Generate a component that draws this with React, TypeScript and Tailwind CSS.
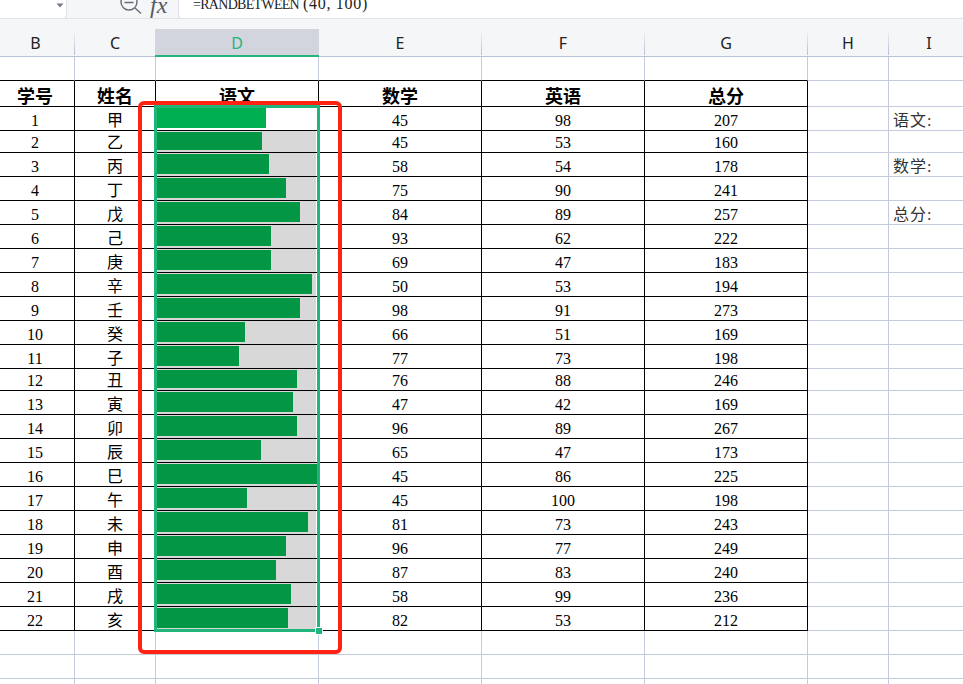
import React from 'react';

type Row = { id: number; name: string; bar: number; math: number; eng: number; total: number; short?: boolean; note?: string };

const rows: Row[] = [
  { id: 1, name: '甲', bar: 109, math: 45, eng: 98, total: 207, note: '语文:' },
  { id: 2, name: '乙', bar: 105, math: 45, eng: 53, total: 160, short: true },
  { id: 3, name: '丙', bar: 112, math: 58, eng: 54, total: 178, note: '数学:' },
  { id: 4, name: '丁', bar: 129, math: 75, eng: 90, total: 241 },
  { id: 5, name: '戊', bar: 143, math: 84, eng: 89, total: 257, note: '总分:' },
  { id: 6, name: '己', bar: 114, math: 93, eng: 62, total: 222 },
  { id: 7, name: '庚', bar: 114, math: 69, eng: 47, total: 183 },
  { id: 8, name: '辛', bar: 155, math: 50, eng: 53, total: 194 },
  { id: 9, name: '壬', bar: 143, math: 98, eng: 91, total: 273 },
  { id: 10, name: '癸', bar: 88, math: 66, eng: 51, total: 169 },
  { id: 11, name: '子', bar: 82, math: 77, eng: 73, total: 198 },
  { id: 12, name: '丑', bar: 140, math: 76, eng: 88, total: 246, short: true },
  { id: 13, name: '寅', bar: 136, math: 47, eng: 42, total: 169 },
  { id: 14, name: '卯', bar: 140, math: 96, eng: 89, total: 267 },
  { id: 15, name: '辰', bar: 104, math: 65, eng: 47, total: 173 },
  { id: 16, name: '巳', bar: 160, math: 45, eng: 86, total: 225 },
  { id: 17, name: '午', bar: 90, math: 45, eng: 100, total: 198 },
  { id: 18, name: '未', bar: 151, math: 81, eng: 73, total: 243 },
  { id: 19, name: '申', bar: 129, math: 96, eng: 77, total: 249 },
  { id: 20, name: '酉', bar: 119, math: 87, eng: 83, total: 240 },
  { id: 21, name: '戌', bar: 134, math: 58, eng: 99, total: 236 },
  { id: 22, name: '亥', bar: 131, math: 82, eng: 53, total: 212 },
];

const cell = 'flex items-end justify-center leading-[18px] border-r border-b border-black';
const light = 'border-r border-b border-[#c4cbdf]';

const Separator = () => <div className="w-px mt-[10px] mb-px shrink-0 bg-gradient-to-b from-[#f5f6f8] to-[#b4bdd2]" />;

const ColHead: React.FC<{ label: string; width: string; pad?: string; sep?: boolean }> = ({ label, width, pad = '', sep = true }) => (
  <div className={`${width} flex bg-[#f5f6f8] border-b border-[#b9c1d6]`}>
    <div className={`flex-1 pt-[14px] text-center leading-[20px] ${pad}`}>{label}</div>
    {sep && <Separator />}
  </div>
);

const BlankRow: React.FC<{ height: string; line: string }> = ({ height, line }) => (
  <div className={`flex ${height}`}>
    <div className={`w-[75px] border-r border-[#c4cbdf] border-b ${line}`} />
    <div className={`w-[81px] border-r border-[#c4cbdf] border-b ${line}`} />
    <div className={`w-[163px] border-r border-[#c4cbdf] border-b ${line}`} />
    <div className={`w-[163px] border-r border-[#c4cbdf] border-b ${line}`} />
    <div className={`w-[163px] border-r border-[#c4cbdf] border-b ${line}`} />
    <div className={`w-[163px] border-r border-[#c4cbdf] border-b ${line}`} />
    <div className={`w-[81px] ${light}`} />
    <div className="flex-1 border-b border-[#c4cbdf]" />
  </div>
);

export default function App() {
  return (
    <div className="relative w-[963px] h-[684px] overflow-hidden bg-white text-black text-[16px] font-['Liberation_Serif','Noto_Sans_CJK_SC',serif]">
      {/* formula bar, cut off by the crop */}
      <div className="flex h-[19px] bg-[#f5f6f8] border-b border-[#dfe2ea] overflow-hidden">
        <div className="w-[67px] -mb-px flex justify-end pr-[2px] pt-[3px] bg-white border-r border-b border-[#dfe2ea] rounded-br-[4px]">
          <svg width="8" height="5" viewBox="0 0 8 5"><path d="M0.5 0.5h7L4 4.5z" fill="#777b85" /></svg>
        </div>
        <div className="w-[111px] flex items-start pl-[52px] gap-[7px]">
          <svg width="24" height="15" viewBox="0 0 24 15" fill="none" stroke="#666b75" strokeWidth="1.4">
            <circle cx="10" cy="2" r="8" />
            <path d="M5.5 2.5h9M16 8l6 5.5" />
          </svg>
          <span className="text-[24px] leading-[16px] italic text-[#555a64] -mt-[3px]">fx</span>
        </div>
        <div className="flex-1 -mb-px pl-[14px] bg-white border-l border-b border-[#dfe2ea] rounded-bl-[4px] whitespace-nowrap leading-[10px] -mt-[1px] text-[#222]">
          <span className="text-[14px] tracking-[-0.7px]">=RANDBETWEEN</span>
          <span className="ml-[4px] tracking-[0.7px]">(40, 100)</span>
        </div>
      </div>

      {/* column letters */}
      <div className="flex h-[38px] font-['Noto_Sans','Noto_Sans_CJK_SC',sans-serif] text-[#222]">
        <ColHead label="B" width="w-[75px]" pad="pr-[3px]" />
        <ColHead label="C" width="w-[80px]" sep={false} />
        <div className="w-[164px] pt-[10px] bg-[#f5f6f8]">
          <div className="h-full pt-[4px] text-center leading-[20px] text-[#21b57c] bg-[#d2d5dd] border-b-2 border-[#21b57c]">D</div>
        </div>
        <ColHead label="E" width="w-[163px]" />
        <ColHead label="F" width="w-[163px]" />
        <ColHead label="G" width="w-[163px]" />
        <ColHead label="H" width="w-[81px]" />
        <ColHead label="I" width="flex-1" pad="pl-[6px]" sep={false} />
      </div>

      <BlankRow height="h-[24px]" line="border-b-black" />

      {/* table header */}
      <div className="flex h-[26px] text-[18px] font-bold">
        <div className={`w-[75px] pr-[4px] ${cell}`}>学号</div>
        <div className={`w-[81px] ${cell}`}>姓名</div>
        <div className={`w-[163px] ${cell}`}>语文</div>
        <div className={`w-[163px] ${cell}`}>数学</div>
        <div className={`w-[163px] ${cell}`}>英语</div>
        <div className={`w-[163px] ${cell}`}>总分</div>
        <div className={`w-[81px] ${light}`} />
        <div className="flex-1 border-b border-[#c4cbdf]" />
      </div>

      {rows.map((r) => (
        <div key={r.id} className={`flex ${r.short ? 'h-[22px]' : 'h-[24px]'}`}>
          <div className={`w-[75px] pr-[4px] ${cell}`}>{r.id}</div>
          <div className={`w-[81px] ${cell}`}>{r.name}</div>
          <div className="w-[163px] pl-px pr-[2px] flex bg-white border-r border-b border-black">
            <div className={`flex-1 flex flex-col ${r.id === 1 ? 'bg-white' : 'bg-[#d8d8d8]'}`}>
              <div
                className={`flex-1 mt-px mb-[2px] ${r.id === 1 ? 'bg-[#00b050]' : 'bg-[#039745]'}`}
                style={{ width: r.bar }}
              />
            </div>
          </div>
          <div className={`w-[163px] ${cell}`}>{r.math}</div>
          <div className={`w-[163px] ${cell}`}>{r.eng}</div>
          <div className={`w-[163px] ${cell}`}>{r.total}</div>
          <div className={`w-[81px] ${light}`} />
          <div className="flex-1 pl-[4px] flex items-end leading-[18px] tracking-[1px] text-[#333] border-b border-[#c4cbdf]">{r.note}</div>
        </div>
      ))}

      <BlankRow height="h-[24px]" line="border-b-[#c4cbdf]" />
      <BlankRow height="h-[24px]" line="border-b-[#c4cbdf]" />
      <BlankRow height="h-[24px]" line="border-b-[#c4cbdf]" />

      {/* selection frame and the red mark drawn over the sheet */}
      <div className="absolute left-[154px] top-[105px] w-[166px] h-[527px] border-[3px] border-[#21b57c]" />
      <div className="absolute left-[316px] top-[628px] w-[6px] h-[6px] bg-[#21b57c] outline outline-1 outline-white" />
      <div className="absolute left-[138px] top-[101px] w-[204px] h-[553px] border-4 border-[#ff2314] rounded-[6px]" />
    </div>
  );
}
